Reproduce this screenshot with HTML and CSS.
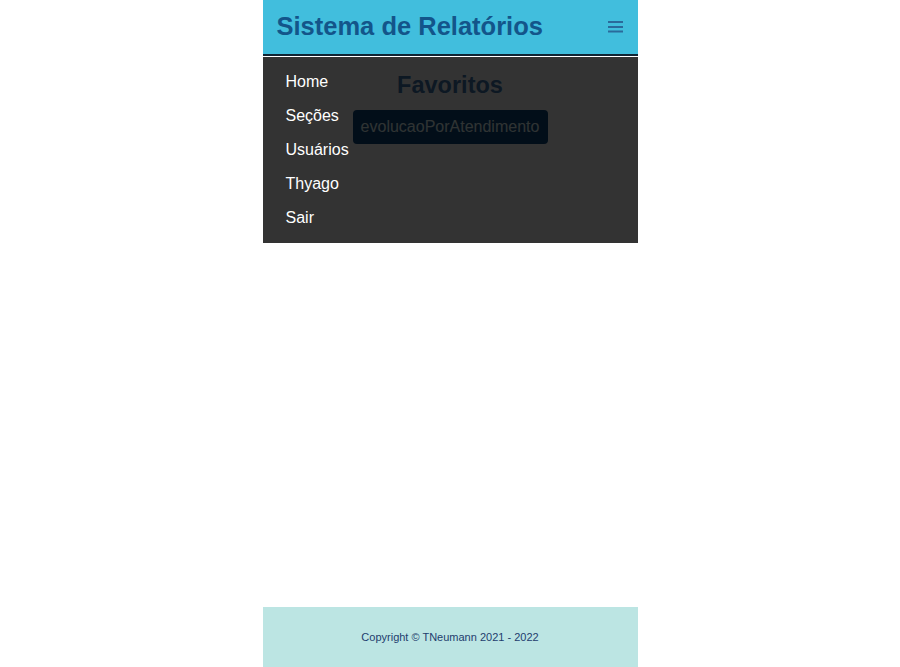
FILE: index.html
```html
<!DOCTYPE html>
<html lang="pt-BR">
<head>
<meta charset="utf-8">
<title>Sistema de Relatórios</title>
<link rel="stylesheet" href="styles.css">
</head>
<body>
<div class="app">
  <header class="topbar">
    <h1 class="brand">Sistema de Relatórios</h1>
    <button class="burger" aria-label="menu">
      <svg width="15" height="12" viewBox="0 0 15 12"><rect x="0" y="0" width="15" height="2"/><rect x="0" y="5" width="15" height="2"/><rect x="0" y="9.5" width="15" height="2"/></svg>
    </button>
  </header>
  <div class="sep"></div>
  <main class="content">
    <h2 class="title">Favoritos</h2>
    <button class="fav">evolucaoPorAtendimento</button>
    <nav class="menu">
      <a href="#">Home</a>
      <a href="#">Seções</a>
      <a href="#">Usuários</a>
      <a href="#">Thyago</a>
      <a href="#">Sair</a>
    </nav>
  </main>
  <footer class="foot">Copyright © TNeumann 2021 - 2022</footer>
</div>
</body>
</html>
```
FILE: styles.css
```css
html, body {
  margin: 0;
  padding: 0;
  background: #ffffff;
  font-family: "Liberation Sans", Arial, sans-serif;
}
.app {
  width: 375px;
  margin: 0 auto;
  min-height: 100vh;
  display: flex;
  flex-direction: column;
}
.topbar {
  height: 54px;
  background: #41bedd;
  border-bottom: 2px solid #0f2433;
  display: flex;
  align-items: center;
  justify-content: space-between;
  padding: 0 14px;
}
.brand {
  margin: 0 0 2px 0;
  font-size: 25.5px;
  font-weight: bold;
  color: #13558a;
}
.burger {
  background: none;
  border: 0;
  padding: 0;
  margin: 0 1px 0 0;
  fill: #2a6a9b;
  display: flex;
}
.sep {
  height: 1px;
  background: #ffffff;
}
.content {
  position: relative;
  flex: 1;
  display: flex;
  flex-direction: column;
  align-items: center;
}
.title {
  margin: 15px 0 0 0;
  font-size: 23.5px;
  line-height: 27px;
  font-weight: bold;
  color: #4378b0;
}
.fav {
  margin-top: 11px;
  width: 195px;
  height: 34px;
  border: 0;
  border-radius: 4px;
  background: #0a467d;
  color: #eaffff;
  font-family: "Liberation Sans", Arial, sans-serif;
  font-size: 16px;
  padding: 0;
}
.menu {
  position: absolute;
  top: 0;
  left: 0;
  right: 0;
  height: 186px;
  box-sizing: border-box;
  background: rgba(0, 0, 0, 0.8);
  padding: 8px 0 8px 23px;
  display: flex;
  flex-direction: column;
}
.menu a {
  color: #ffffff;
  text-decoration: none;
  font-size: 16px;
  line-height: 34px;
}
.foot {
  height: 60px;
  background: #bce5e3;
  color: #1f3d6e;
  font-size: 11px;
  display: flex;
  align-items: center;
  justify-content: center;
}
```
